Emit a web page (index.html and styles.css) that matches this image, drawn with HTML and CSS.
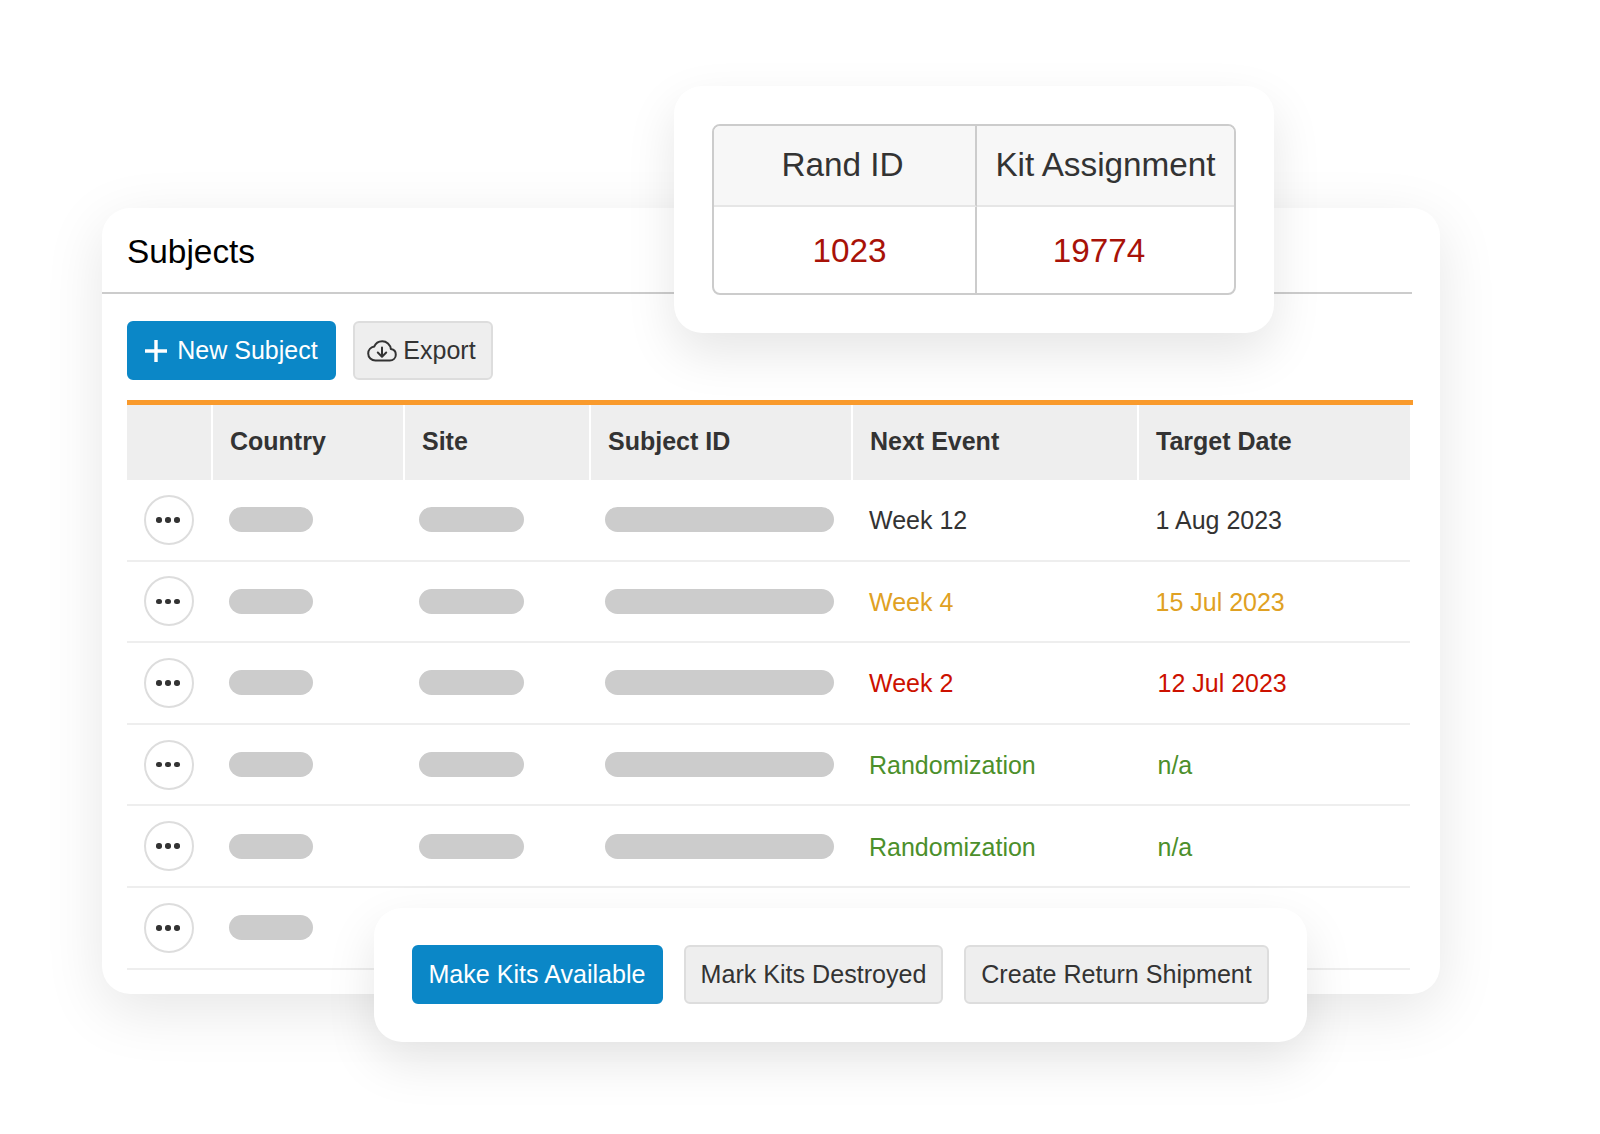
FILE: index.html
```html
<!DOCTYPE html>
<html lang="en">
<head>
<meta charset="utf-8">
<title>Subjects</title>
<link rel="stylesheet" href="styles.css">
</head>
<body>
<main class="stage">
  <section class="card subjects">
    <h1 class="title">Subjects</h1>
    <div class="toolbar">
      <button class="btn primary icon-btn">
        <svg class="plus" viewBox="0 0 24 24" aria-hidden="true"><path d="M12 1V23M1 12H23"/></svg>
        New Subject
      </button>
      <button class="btn icon-btn export">
        <svg class="cloud" viewBox="0 0 30 24" aria-hidden="true"><path d="M8.500 21.500H22.800C26.200 21.500 28.800 19 28.800 15.700C28.800 12.800 26.700 10.500 23.900 10.100C23.300 5.500 19.600 2.200 15.200 2.200C11.600 2.200 8.500 4.300 7.200 7.600C3.800 8.200 1.200 11 1.200 14.500C1.200 18.400 4.400 21.500 8.500 21.500Z"/><path d="M15 8.500V17.500M10.800 13.500L15 17.700L19.200 13.500"/></svg>
        Export
      </button>
    </div>
    <div class="table">
      <div class="row head">
        <div class="cell"></div>
        <div class="cell">Country</div>
        <div class="cell">Site</div>
        <div class="cell">Subject ID</div>
        <div class="cell">Next Event</div>
        <div class="cell">Target Date</div>
      </div>
      <div class="row">
        <div class="cell"><span class="more"><i></i><i></i><i></i></span></div>
        <div class="cell"><span class="pill country"></span></div>
        <div class="cell"><span class="pill site"></span></div>
        <div class="cell"><span class="pill subject"></span></div>
        <div class="cell">Week 12</div>
        <div class="cell">1 Aug 2023</div>
      </div>
      <div class="row amber">
        <div class="cell"><span class="more"><i></i><i></i><i></i></span></div>
        <div class="cell"><span class="pill country"></span></div>
        <div class="cell"><span class="pill site"></span></div>
        <div class="cell"><span class="pill subject"></span></div>
        <div class="cell">Week 4</div>
        <div class="cell">15 Jul 2023</div>
      </div>
      <div class="row red">
        <div class="cell"><span class="more"><i></i><i></i><i></i></span></div>
        <div class="cell"><span class="pill country"></span></div>
        <div class="cell"><span class="pill site"></span></div>
        <div class="cell"><span class="pill subject"></span></div>
        <div class="cell">Week 2</div>
        <div class="cell nudge">12 Jul 2023</div>
      </div>
      <div class="row green">
        <div class="cell"><span class="more"><i></i><i></i><i></i></span></div>
        <div class="cell"><span class="pill country"></span></div>
        <div class="cell"><span class="pill site"></span></div>
        <div class="cell"><span class="pill subject"></span></div>
        <div class="cell">Randomization</div>
        <div class="cell nudge">n/a</div>
      </div>
      <div class="row green">
        <div class="cell"><span class="more"><i></i><i></i><i></i></span></div>
        <div class="cell"><span class="pill country"></span></div>
        <div class="cell"><span class="pill site"></span></div>
        <div class="cell"><span class="pill subject"></span></div>
        <div class="cell">Randomization</div>
        <div class="cell nudge">n/a</div>
      </div>
      <div class="row">
        <div class="cell"><span class="more"><i></i><i></i><i></i></span></div>
        <div class="cell"><span class="pill country"></span></div>
        <div class="cell"><span class="pill site"></span></div>
        <div class="cell"><span class="pill subject"></span></div>
        <div class="cell"></div>
        <div class="cell"></div>
      </div>
    </div>
  </section>

  <section class="card rand">
    <div class="rand-table">
      <div class="rand-cell rand-head first">Rand ID</div>
      <div class="rand-cell rand-head">Kit Assignment</div>
      <div class="rand-cell rand-val first-val">1023</div>
      <div class="rand-cell rand-val second-val">19774</div>
    </div>
  </section>

  <section class="card actions">
    <button class="btn primary">Make Kits Available</button>
    <button class="btn">Mark Kits Destroyed</button>
    <button class="btn">Create Return Shipment</button>
  </section>
</main>
</body>
</html>
```

FILE: styles.css
```css
* { box-sizing: border-box; }

html, body {
  margin: 0;
  background: #fff;
}

body {
  font-family: "Liberation Sans", Arial, sans-serif;
  color: #333;
}

.stage {
  position: relative;
  width: 1600px;
  height: 1134px;
  overflow: hidden;
  padding: 208px 160px 0 102px;
}

.card {
  background: #fff;
  border-radius: 28px;
}

.subjects {
  height: 786px;
  padding-right: 27px;
  overflow: hidden;
  box-shadow: 0 16px 60px rgba(0, 0, 0, 0.1);
}

.title {
  margin: 0 1px 0 0;
  height: 86px;
  padding: 27px 0 0 25px;
  font-size: 33.4px;
  line-height: 34px;
  font-weight: 400;
  color: #000;
  border-bottom: 2px solid #ccc;
}

.toolbar {
  display: flex;
  gap: 17px;
  margin: 27px 0 20px 25px;
}

.btn {
  display: inline-flex;
  align-items: center;
  justify-content: center;
  height: 59px;
  margin: 0;
  padding: 0 16px;
  font: 400 25px/1 "Liberation Sans", Arial, sans-serif;
  color: #333;
  background: #eee;
  border: 2px solid #ddd;
  border-radius: 6px;
}

.btn.primary {
  color: #fff;
  background: #0b87c7;
  border-color: #0b87c7;
}

.icon-btn { gap: 8px; }
.toolbar .primary { width: 209px; gap: 9px; padding: 0 1px 0 0; }
.toolbar .export { width: 140px; padding: 0 3px 0 0; gap: 6px; }

.plus {
  width: 24px;
  height: 24px;
  fill: none;
  stroke: #fff;
  stroke-width: 3.4;
}

.cloud {
  width: 30px;
  height: 24px;
  fill: none;
  stroke: #333;
  stroke-width: 2;
  stroke-linejoin: round;
  stroke-linecap: round;
}

.table {
  margin-left: 25px;
  border-top: 5px solid #f99a2c;
}

.row {
  display: grid;
  grid-template-columns: 84px 192px 186px 262px 286px 273px;
  height: 81.6px;
  width: 1283px;
  font-size: 25px;
  border-bottom: 2px solid #eee;
}

.cell {
  display: flex;
  align-items: center;
  padding: 2px 0 0 17px;
}

.row .cell:first-child { padding: 0 0 0 17px; }
.row .cell:nth-child(2) { padding: 0 0 0 18px; }
.row .cell:nth-child(3) { padding: 0 0 0 16px; }
.row .cell:nth-child(4) { padding: 0 0 0 16px; }
.cell:nth-child(5) { padding-left: 18px; }
.cell:nth-child(6) { padding-left: 18.500px; }

.head {
  height: 75px;
  font-weight: 700;
  background: #eee;
  border-bottom: 0;
}

.head .cell + .cell {
  border-left: 2px solid #fff;
}

.row.head .cell:nth-child(n) { padding: 0 0 2px 17px; }

.row .nudge { padding-left: 20.500px; }

.amber { color: #e0a123; }
.red { color: #cc1100; }
.green { color: #4c8f2b; }

.more {
  display: flex;
  align-items: center;
  justify-content: center;
  gap: 3.500px;
  width: 50px;
  height: 50px;
  padding-right: 2px;
  border: 2px solid #ddd;
  border-radius: 50%;
  background: #fff;
}

.more i {
  width: 5.500px;
  height: 5.500px;
  border-radius: 50%;
  background: #333;
}

.pill {
  display: block;
  height: 25px;
  border-radius: 13px;
  background: #ccc;
}

.country { width: 84px; }
.site { width: 105px; }
.subject { width: 229px; }

.rand {
  position: absolute;
  left: 674px;
  top: 86px;
  width: 600px;
  height: 247px;
  padding: 38px;
  box-shadow: 0 20px 50px rgba(0, 0, 0, 0.1);
}

.rand-table {
  display: grid;
  grid-template-columns: 263px 1fr;
  grid-template-rows: 81px 1fr;
  height: 171px;
  border: 2px solid #ccc;
  border-radius: 8px;
  overflow: hidden;
}

.rand-cell {
  display: flex;
  align-items: center;
  justify-content: center;
  font-size: 33.300px;
}

.rand-head {
  background: #f7f7f7;
  border-bottom: 2px solid #e6e6e6;
  padding-bottom: 1px;
}

.rand-cell:nth-child(odd) {
  border-right: 2px solid #ccc;
}

.rand-head.first { padding-right: 4px; }
.rand-val { color: #a81208; padding-top: 2px; }
.first-val { padding-left: 10px; }
.second-val { padding-right: 13px; }

.actions {
  position: absolute;
  left: 374px;
  top: 908px;
  width: 933px;
  height: 134px;
  display: flex;
  align-items: center;
  gap: 21px;
  padding: 0 0 1px 38px;
  box-shadow: 0 20px 50px rgba(0, 0, 0, 0.1);
}

.actions .btn { font-size: 25.100px; }
.actions .btn:nth-child(1) { width: 251px; padding: 0 1px 0 0; }
.actions .btn:nth-child(2) { width: 259px; padding: 0; }
.actions .btn:nth-child(3) { width: 305px; padding: 0; }
```
